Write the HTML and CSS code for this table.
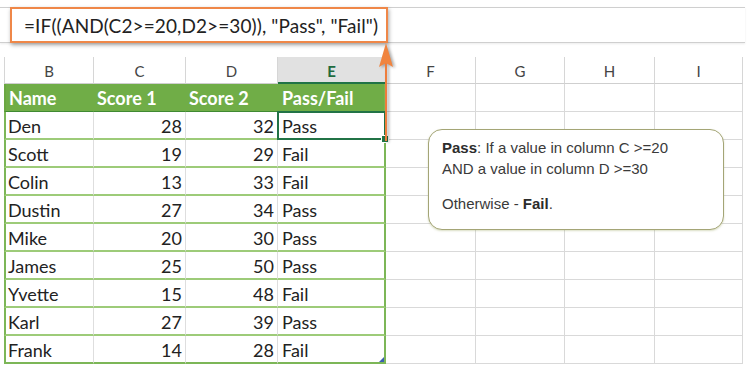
FILE: index.html
```html
<!DOCTYPE html>
<html>
<head>
<meta charset="utf-8">
<link rel="stylesheet" href="styles.css">
</head>
<body>
<div class="page">
  <div class="fbar">
    <div class="formula">=IF((AND(C2&gt;=20,D2&gt;=30)), "Pass", "Fail")</div>
  </div>
  <div class="sheet">
    <div class="ch first">B</div><div class="ch">C</div><div class="ch">D</div><div class="ch sel">E</div><div class="ch">F</div><div class="ch">G</div><div class="ch">H</div><div class="ch">I</div>

    <div class="c hd first">Name</div><div class="c hd">Score 1</div><div class="c hd">Score 2</div><div class="c hd last">Pass/Fail</div><div class="e"></div><div class="e"></div><div class="e"></div><div class="e"></div>

    <div class="c first">Den</div><div class="c num">28</div><div class="c num">32</div><div class="c last active">Pass</div><div class="e"></div><div class="e"></div><div class="e"></div><div class="e"></div>
    <div class="c first">Scott</div><div class="c num">19</div><div class="c num">29</div><div class="c last">Fail</div><div class="e"></div><div class="e"></div><div class="e"></div><div class="e"></div>
    <div class="c first">Colin</div><div class="c num">13</div><div class="c num">33</div><div class="c last">Fail</div><div class="e"></div><div class="e"></div><div class="e"></div><div class="e"></div>
    <div class="c first">Dustin</div><div class="c num">27</div><div class="c num">34</div><div class="c last">Pass</div><div class="e"></div><div class="e"></div><div class="e"></div><div class="e"></div>
    <div class="c first">Mike</div><div class="c num">20</div><div class="c num">30</div><div class="c last">Pass</div><div class="e"></div><div class="e"></div><div class="e"></div><div class="e"></div>
    <div class="c first">James</div><div class="c num">25</div><div class="c num">50</div><div class="c last">Pass</div><div class="e"></div><div class="e"></div><div class="e"></div><div class="e"></div>
    <div class="c first">Yvette</div><div class="c num">15</div><div class="c num">48</div><div class="c last">Fail</div><div class="e"></div><div class="e"></div><div class="e"></div><div class="e"></div>
    <div class="c first">Karl</div><div class="c num">27</div><div class="c num">39</div><div class="c last">Pass</div><div class="e"></div><div class="e"></div><div class="e"></div><div class="e"></div>
    <div class="c first bot">Frank</div><div class="c num bot">14</div><div class="c num bot">28</div><div class="c last bot corner">Fail</div><div class="e"></div><div class="e"></div><div class="e"></div><div class="e"></div>
  </div>

  <div class="callout">
    <p><b>Pass</b>: If a value in column C &gt;=20<br>AND a value in column D &gt;=30</p>
    <p>Otherwise - <b>Fail</b>.</p>
  </div>

  <svg class="arrow" width="24" height="104" viewBox="0 0 24 104">
    <line x1="12" y1="20" x2="12" y2="99" stroke="#ee7d3c" stroke-width="2"/>
    <path d="M12 1 L19 25 L12 21 L5 25 Z" fill="#f0843f"/>
  </svg>
</div>
</body>
</html>
```

FILE: styles.css
```css
html, body {
  margin: 0;
  padding: 0;
  background: #ffffff;
}

.page {
  position: relative;
  width: 750px;
  height: 371px;
  overflow: hidden;
  font-family: "Lato", "Open Sans", sans-serif;
}

.fbar {
  margin-top: 7px;
  width: 745px;
  height: 34px;
  border-top: 1px solid #cfcfcf;
  border-bottom: 1px solid #cfcfcf;
  box-shadow: 0 1px 2px rgba(0,0,0,0.08);
  display: flex;
}

.formula {
  margin-left: 10px;
  margin-top: -1px;
  width: 378px;
  height: 36px;
  box-sizing: border-box;
  border: 2px solid #ef8748;
  box-shadow: 1px 2px 4px rgba(0,0,0,0.35);
  background: #fff;
  padding-left: 12px;
  font-size: 19px;
  letter-spacing: 0.1px;
  line-height: 33px;
  color: #222;
  white-space: nowrap;
}

.sheet {
  margin-top: 14px;
  margin-left: 4px;
  display: grid;
  grid-template-columns: 90px 92px 92px 108px 90px 89px 90px 88px;
  grid-template-rows: 27px repeat(10, 28px);
}

.ch {
  box-sizing: border-box;
  border-right: 1px solid #d6d6d6;
  border-bottom: 1px solid #cfcfcf;
  text-align: center;
  font-size: 15px;
  line-height: 28px;
  color: #444;
  background: #fff;
}
.ch.first { border-left: 1px solid #d6d6d6; }
.ch.sel {
  background: #e1e1e1;
  color: #1f6b3f;
  font-weight: 700;
  border-bottom: 2px solid #217346;
}

.c {
  box-sizing: border-box;
  border-right: 1px solid #dedede;
  border-bottom: 2px solid #9dcb79;
  font-size: 18px;
  line-height: 24px;
  padding: 2px 3px 0 3px;
  color: #222;
  white-space: nowrap;
}
.c.first { border-left: 2px solid #7cb657; padding-left: 2px; }
.c.last { border-right: 2px solid #7cb657; padding-left: 4px; }
.c.num { text-align: right; padding-right: 3px; }
.c.bot { border-bottom: 2px solid #7cb657; }

.c.hd {
  background: #70ad47;
  color: #fff;
  font-weight: 700;
  border-right-color: #70ad47;
  border-bottom: 1px solid #3f8a32;
  padding-left: 3px;
}
.c.hd.first { border-left-color: #6aa742; padding-left: 3px; }
.c.hd.last { border-right-color: #7cb657; padding-left: 4px; }

.c.active {
  position: relative;
}
.c.active::before {
  content: "";
  position: absolute;
  left: -1px;
  top: -1px;
  right: -2px;
  bottom: -2px;
  border: 2px solid #217346;
}
.c.active::after {
  content: "";
  position: absolute;
  right: -5px;
  bottom: -5px;
  width: 6px;
  height: 6px;
  background: #217346;
  border: 1px solid #fff;
}

.c.corner { position: relative; }
.c.corner::after {
  content: "";
  position: absolute;
  right: 0;
  bottom: 0;
  width: 0;
  height: 0;
  border-left: 5px solid transparent;
  border-bottom: 5px solid #3a5fb0;
}

.e {
  box-sizing: border-box;
  border-right: 1px solid #d9d9d9;
  border-bottom: 1px solid #d9d9d9;
}

.callout {
  position: absolute;
  left: 428px;
  top: 129px;
  width: 296px;
  height: 101px;
  box-sizing: border-box;
  border: 1.5px solid #a4a576;
  border-radius: 14px;
  background: #fff;
  box-shadow: 0 1px 2px rgba(150,160,90,0.35);
  padding: 7px 0 0 13px;
  font-family: "Liberation Sans", Arial, sans-serif;
  font-size: 15px;
  line-height: 21px;
  color: #3a3a3a;
}
.callout p { margin: 0 0 14px 0; }
.callout b { color: #2c2c2c; }

.arrow {
  position: absolute;
  left: 374px;
  top: 42px;
  filter: drop-shadow(2px 1px 1.5px rgba(0,0,0,0.35));
}
```
